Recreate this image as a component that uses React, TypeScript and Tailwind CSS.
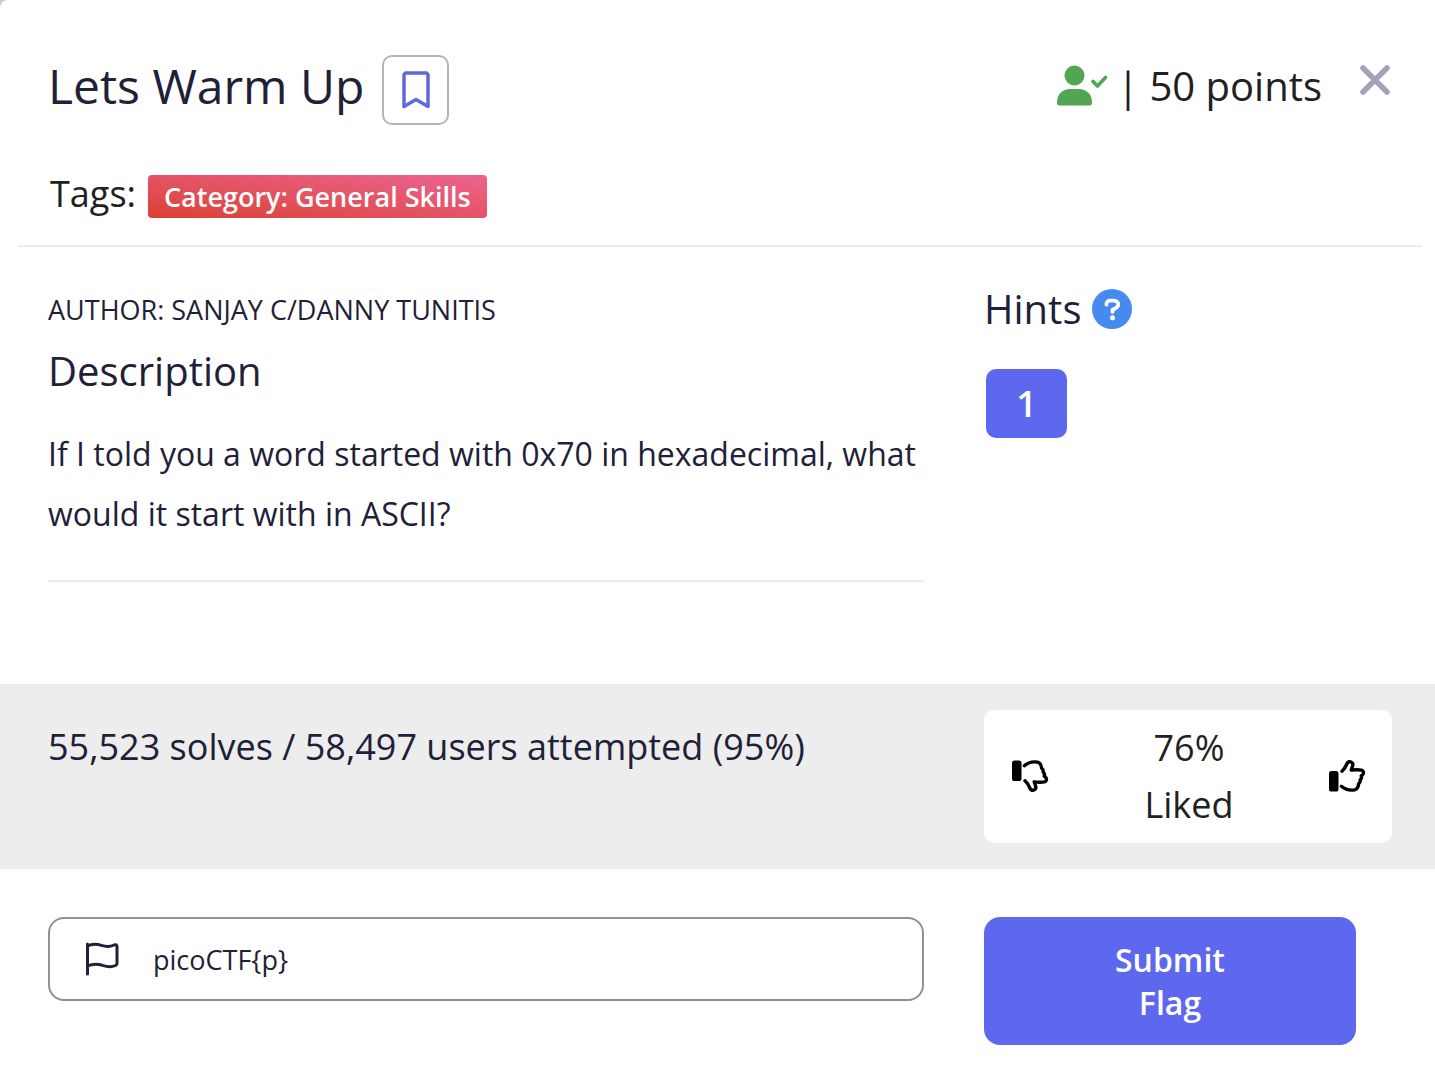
import { useState } from "react";

function Thumb({ down = false }: { down?: boolean }) {
  return (
    <svg className={down ? "-scale-y-100" : ""} width="37" height="32" viewBox="0 0 37 32" fill="none" stroke="#000" strokeWidth="3.4" strokeLinecap="round" strokeLinejoin="round" aria-hidden="true">
      <rect x="0" y="11" width="9.5" height="20.5" rx="2.6" fill="#000" stroke="none" />
      <path d="M13 11.2c2-1.700 3.600-4.200 4.800-7.200.8-2 2.400-2.700 4.200-2 1.700.7 2.200 2.300 1.600 4l-1.400 4.100c3-.3 7.500-.5 10.400.1 1.700.5 2.400 2.300 1.400 4l-1.800 1.700c.6 1.400.3 2.800-1 3.900.2 1.700-.2 3-1.600 4-.2 2.500-1.400 5.300-4 6-4.500.8-9 .1-13.200-3.500" />
    </svg>
  );
}

export default function App() {
  const [flag, setFlag] = useState("picoCTF{p}");
  return (
    <div className="bg-[#c9c9d2]">
      <main className="min-h-screen rounded-tl-lg bg-white font-['Open_Sans',sans-serif] text-[#1f2138]">
        <header className="mr-[13px] ml-[18px] border-b-2 border-[#ececec] pt-[55px] pr-8 pb-[27px] pl-[30px]">
          <div className="flex items-start justify-between">
            <div className="flex items-start gap-[18px]">
              <h1 className="text-5xl leading-[62px]">Lets Warm Up</h1>
              <button aria-label="Bookmark" className="flex h-[70px] w-[67px] items-center justify-center rounded-[10px] border-2 border-[#b2b5bb]">
                <svg width="28" height="38" viewBox="0 0 28 38" fill="none" stroke="#6068dc" strokeWidth="3.5" strokeLinejoin="round" aria-hidden="true">
                  <path d="M2 4C2 3 3 2 4 2h20C25 2 26 3 26 4V35.500l-12-7-12 7z" />
                </svg>
              </button>
            </div>
            <div className="flex items-start">
              <svg className="mt-[10px]" width="51" height="41" viewBox="0 0 51 41" fill="#52a651" aria-hidden="true">
                <circle cx="17.500" cy="10.500" r="10" />
                <path d="M0 38v-1c0-7.500 5.500-13 13-13h9c7.500 0 13 5.500 13 13v1c0 1.500-1 2.500-2.500 2.500h-30C1 40.500 0 39.500 0 38z" />
                <path d="m36 16.500 4.500 4.500 8-8.500" fill="none" stroke="#52a651" strokeWidth="3.6" strokeLinecap="round" strokeLinejoin="round" />
              </svg>
              <span className="ml-[9px] text-[40px] leading-[62px] text-[#212121]">| 50 points</span>
              <button aria-label="Close" className="mt-[10px] ml-[38px]">
                <svg width="30" height="30" viewBox="0 0 30 30" stroke="#a0a3ba" strokeWidth="5.5" strokeLinecap="round" aria-hidden="true"><path d="m3 3 24 24M27 3 3 27" /></svg>
              </button>
            </div>
          </div>
          <div className="mt-[50px] flex items-start gap-3 pl-[2px]">
            <span className="text-4xl leading-[38px] text-[#212121]">Tags:</span>
            <span className="rounded bg-linear-to-tr from-[#db3f2d] to-[#ec6490] px-4 text-[27px] leading-[43px] font-semibold text-white">Category: General Skills</span>
          </div>
        </header>

        <div className="grid grid-cols-[minmax(0,876fr)_minmax(0,408fr)] gap-[60px] pr-[43px] pb-[102px] pl-12">
          <section className="border-b-2 border-[#ececec] pt-[43px] pb-9">
            <p className="text-[27px] leading-10">AUTHOR: SANJAY C/DANNY TUNITIS</p>
            <h2 className="mt-[11px] text-[40px] leading-[60px]">Description</h2>
            <p className="mt-[23px] text-[32px] leading-[60px]">If I told you a word started with 0x70 in hexadecimal, what would it start with in ASCII?</p>
          </section>
          <section className="pt-8">
            <div className="flex items-center gap-[11px]">
              <h2 className="text-[40px] leading-[60px]">Hints</h2>
              <button aria-label="About hints">
                <svg width="40" height="40" viewBox="0 0 40 40" fill="none" aria-hidden="true">
                  <circle cx="20" cy="20" r="20" fill="#448aef" />
                  <path d="M14.500 15.500v-.5c0-2 1.500-3.300 3.500-3.300h4c2.300 0 4.200 1.600 4.200 3.800 0 1.600-.9 2.700-2.200 3.400L20.500 21v1.800" stroke="#fff" strokeWidth="3.8" strokeLinecap="round" strokeLinejoin="round" />
                  <circle cx="20.500" cy="28.700" r="2.500" fill="#fff" />
                </svg>
              </button>
            </div>
            <button className="mt-[30px] ml-[2px] h-[69px] w-[81px] rounded-[10px] bg-[#5e68ee] text-4xl font-semibold text-white">1</button>
          </section>
        </div>

        <section className="grid grid-cols-[minmax(0,876fr)_minmax(0,408fr)] gap-[60px] bg-[#ededed] py-[26px] pr-[43px] pl-12">
          <p className="pt-2 text-4xl leading-[57px]">55,523 solves / 58,497 users attempted (95%)</p>
          <div className="flex items-center justify-between rounded-[10px] bg-white pt-[9px] pr-[26px] pb-[10px] pl-7">
            <button aria-label="Dislike"><Thumb down /></button>
            <p className="text-center text-4xl leading-[57px] text-[#212121]">76%<br />Liked</p>
            <button aria-label="Like"><Thumb /></button>
          </div>
        </section>

        <form className="grid grid-cols-[minmax(0,876fr)_minmax(0,408fr)] items-start gap-[60px] pt-12 pr-[43px] pb-6 pl-12" onSubmit={(e) => e.preventDefault()}>
          <label className="flex h-[84px] items-center gap-[34px] rounded-2xl border-2 border-[#8f9199] pl-[35px]">
            <svg className="shrink-0" width="34" height="34" viewBox="0 0 34 34" fill="none" stroke="#1f2138" strokeWidth="3" strokeLinecap="round" strokeLinejoin="round" aria-hidden="true">
              <path d="M2.500 2v30M2.500 4c4-2.200 8-2.600 14-.6 5 1.600 8 1.800 12.500-.4 2-.8 3 0 3 1.500v17c0 1-.5 1.500-1.500 2-4.500 2-8 1.500-13-.2-6-1.800-10-1.500-15 .7" />
            </svg>
            <input aria-label="Flag" className="min-w-0 flex-1 bg-transparent pt-[2px] text-[27px] outline-none" value={flag} onChange={(e) => setFlag(e.target.value)} />
          </label>
          <button type="submit" className="mr-9 rounded-2xl bg-[#5e68ee] px-24 py-[21px] text-[32px] leading-[43px] font-semibold text-white">Submit<br />Flag</button>
        </form>
      </main>
    </div>
  );
}
